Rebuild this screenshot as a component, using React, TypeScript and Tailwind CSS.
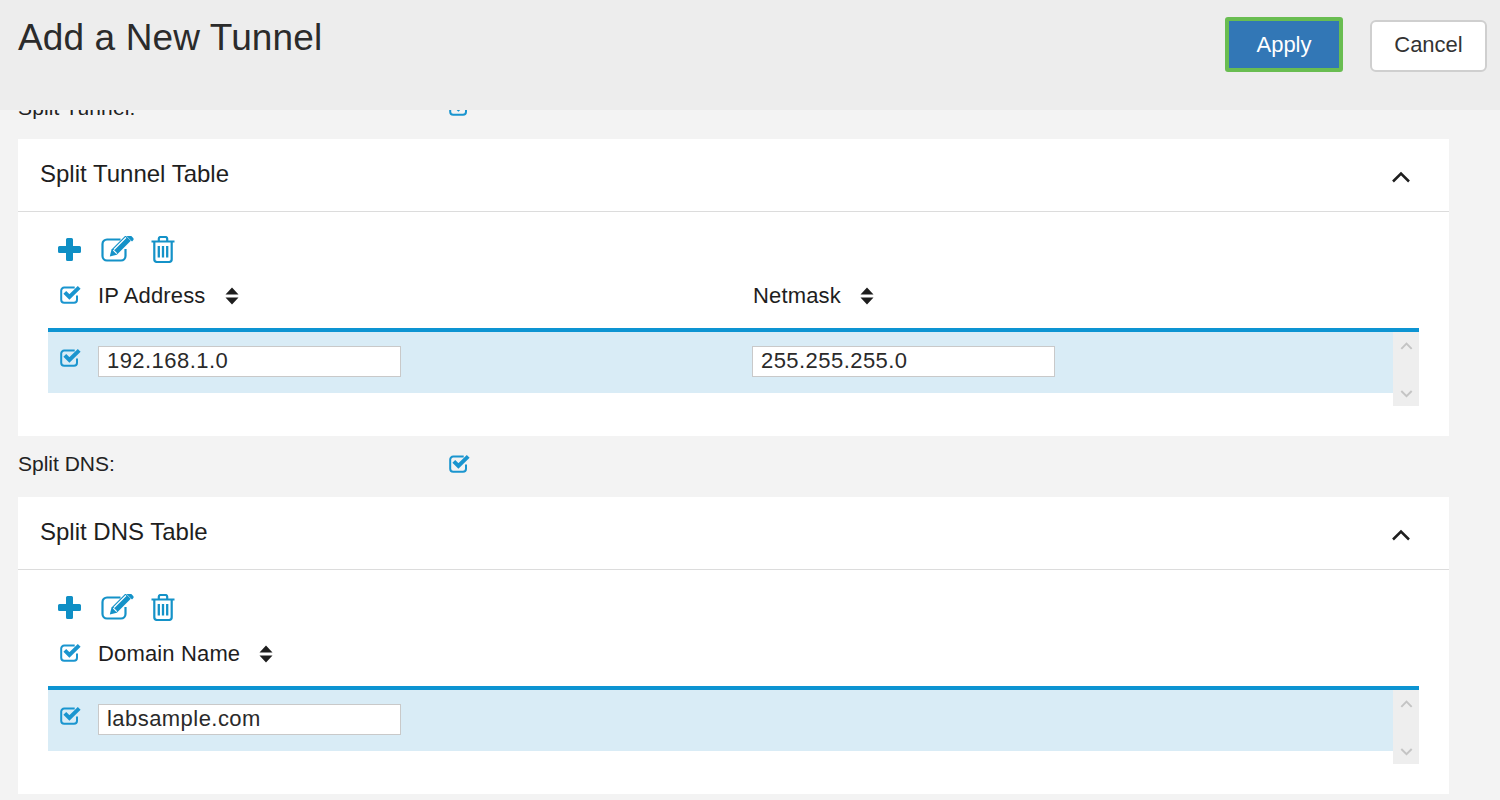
import React from "react";

function Check() {
  return (
    <svg width="22" height="20" viewBox="0 0 22 20" fill="none" className="block">
      <path d="M17 10.5v4.3a3 3 0 0 1-3 3H4.2a3 3 0 0 1-3-3V5.6a3 3 0 0 1 3-3h10.5" stroke="#1a95cf" strokeWidth="2" />
      <path d="M4.8 7.4l4.6 4.6 9.8-9.6" stroke="#1a95cf" strokeWidth="4" />
    </svg>
  );
}

function Sort() {
  return (
    <svg width="14" height="18" viewBox="0 0 14 18" className="block">
      <path d="M7 0.5L13.5 7.5H0.5Z M7 17.5L13.5 10.5H0.5Z" fill="#1e1e1e" />
    </svg>
  );
}

function Chevron({ up = true, color = "#1e1e1e", size = 20, w = 2.5 }: { up?: boolean; color?: string; size?: number; w?: number }) {
  return (
    <svg width={size} height={size * 0.6} viewBox="0 0 20 12" fill="none" className="block">
      <path d={up ? "M2 10.5L10 2.5L18 10.5" : "M2 1.5L10 9.5L18 1.5"} stroke={color} strokeWidth={w} />
    </svg>
  );
}

function Toolbar() {
  return (
    <div className="flex items-center h-[26px] pl-[9px]">
      <svg width="25" height="25" viewBox="0 0 25 25" className="block">
        <path d="M9 2.5A1.5 1.5 0 0 1 10.5 1h4A1.5 1.5 0 0 1 16 2.5V9h6.5A1.5 1.5 0 0 1 24 10.5v4a1.5 1.5 0 0 1-1.5 1.5H16v6.5a1.5 1.5 0 0 1-1.5 1.5h-4A1.5 1.5 0 0 1 9 22.5V16H2.5A1.5 1.5 0 0 1 1 14.5v-4A1.5 1.5 0 0 1 2.5 9H9Z" fill="#0f8fc5" />
      </svg>
      <svg width="33" height="26" viewBox="0 0 33 26" fill="none" className="block ml-[19px]">
        <path d="M19.5 3.5H6A4.5 4.5 0 0 0 1.5 8v12A4.5 4.5 0 0 0 6 24.5h14a4.5 4.5 0 0 0 4.5-4.5v-7" stroke="#1492c8" strokeWidth="2.2" />
        <path d="M10.5 13.5l-1.7 7 7-1.7L29.8 4.8 24.5-.5Z" fill="#1492c8" />
        <path d="M26 -1.2l5.5 5.5 1-1a2 2 0 0 0 0-2.8l-1.7-1.7a2 2 0 0 0-2.8 0Z" fill="#1492c8" transform="translate(-.5 1.2)" />
        <path d="M12.3 14.2l3.5 3.5M13 13.5l12-12" stroke="#fff" strokeWidth="1.2" />
      </svg>
      <svg width="24" height="27" viewBox="0 0 24 27" fill="none" className="block ml-[17px]">
        <path d="M.5 5.5h23M7.8 5V2.8A1.8 1.8 0 0 1 9.6 1h4.8a1.8 1.8 0 0 1 1.8 1.8V5M3.3 6v17.2A2.8 2.8 0 0 0 6 26h12a2.8 2.8 0 0 0 2.7-2.8V6" stroke="#1492c8" strokeWidth="2.2" />
        <path d="M7.8 10v11.5M12 10v11.5M16.2 10v11.5" stroke="#1492c8" strokeWidth="2.3" />
      </svg>
    </div>
  );
}

function Col({ label, className }: { label: string; className?: string }) {
  return (
    <div className={"flex items-center gap-[19px] " + (className ?? "")}>
      <span className="text-[22px] tracking-[0.15px] text-[#1e1e1e] leading-none">{label}</span>
      <Sort />
    </div>
  );
}

function Field({ value }: { value: string }) {
  return (
    <input
      readOnly
      value={value}
      className="w-[303px] h-[31px] bg-white border border-[#c9c9c9] px-[8px] pb-[2px] text-[22px] text-[#2a2a2a] outline-none tracking-[0.45px]"
    />
  );
}

function Card({ title, cols, values }: { title: string; cols: string[]; values: string[] }) {
  return (
    <section className="bg-white mx-[18px] w-[1431px] h-[297px]">
      <div className="h-[73px] border-b border-[#dcdcdc] flex items-center justify-between pl-[22px] pr-[38px]">
        <h2 className="text-[24px] text-[#1e1e1e] font-normal pb-[2px]">{title}</h2>
        <div className="pt-[4px]"><Chevron /></div>
      </div>
      <div className="pl-[30px] pr-[30px] pt-[24px]">
        <Toolbar />
        <div className="flex items-center h-[46px] mt-[10px] pl-[12px]">
          <div className="w-[38px] -mt-[1px]"><Check /></div>
          <Col label={cols[0]} className="w-[655px] mt-[1px]" />
          {cols[1] && <Col label={cols[1]} className="mt-[1px]" />}
        </div>
        <div className="h-[4px] bg-[#0d94d2] mt-[10px]" />
        <div className="flex items-start">
          <div className="flex-1 h-[61px] bg-[#d9ecf6] flex items-start pt-[14px] pl-[12px]">
            <div className="w-[38px] pt-[2px]"><Check /></div>
            <div className="w-[654px]"><Field value={values[0]} /></div>
            {values[1] && <Field value={values[1]} />}
          </div>
          <div className="w-[26px] h-[74px] bg-[#eeeeee] flex flex-col items-center justify-between pt-[10px] pb-[8px]">
            <Chevron color="#c4c4c4" size={13} w={3} />
            <Chevron up={false} color="#c4c4c4" size={13} w={3} />
          </div>
        </div>
      </div>
    </section>
  );
}

export default function App() {
  return (
    <div
      className="w-[1500px] h-[800px] overflow-hidden bg-[#f3f3f3]"
      style={{ fontFamily: '"Liberation Sans", Arial, sans-serif' }}
    >
      <header className="relative z-10 h-[110px] bg-[#ededed] flex items-start justify-between pl-[18px] pr-[13px]">
        <h1 className="text-[37px] tracking-[0.12px] leading-none text-[#2b2b2b] font-normal mt-[19px]">Add a New Tunnel</h1>
        <div className="flex items-start gap-[27px] mt-[17px]">
          <button className="w-[118px] h-[55px] rounded-[3px] bg-[#3277b6] border-[4px] border-[#69bd51] text-white text-[22px]">Apply</button>
          <button className="w-[117px] h-[52px] mt-[3px] rounded-[6px] bg-white border-2 border-[#cfcfcf] text-[#333] text-[22px] pb-[3px]">Cancel</button>
        </div>
      </header>
      <div className="-mt-[13px] h-[42px] flex items-start pl-[18px]">
        <span className="w-[431px] text-[21px] tracking-[0.15px] leading-[22px] text-[#222]">Split Tunnel:</span>
        <Check />
      </div>
      <Card title="Split Tunnel Table" cols={["IP Address", "Netmask"]} values={["192.168.1.0", "255.255.255.0"]} />
      <div className="h-[61px] flex items-center pl-[18px] pb-[5px]">
        <span className="w-[431px] text-[21px] text-[#222]">Split DNS:</span>
        <Check />
      </div>
      <Card title="Split DNS Table" cols={["Domain Name"]} values={["labsample.com"]} />
    </div>
  );
}
